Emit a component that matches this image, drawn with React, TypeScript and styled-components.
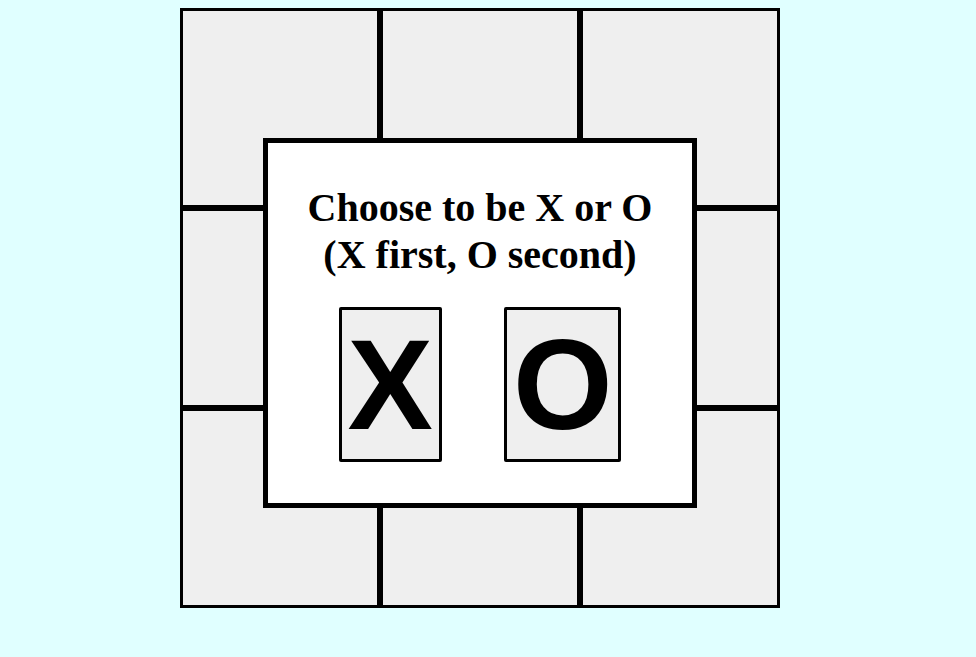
import React from "react";
import styled, { createGlobalStyle } from "styled-components";

const GlobalStyle = createGlobalStyle`
  html, body {
    margin: 0;
    padding: 0;
    background: #e0ffff;
  }
  body {
    font-family: "Liberation Serif", "Times New Roman", serif;
  }
`;

const PageStyled = styled.div`
  padding: 8px 0 0 180px;
`;

const BoardStyled = styled.div`
  position: relative;
  display: grid;
  grid-template-columns: repeat(3, 200px);
  grid-template-rows: repeat(3, 200px);
  width: 600px;
`;

const CellStyled = styled.button`
  box-sizing: border-box;
  width: 200px;
  height: 200px;
  margin: 0;
  padding: 0;
  border: 3px solid #000;
  background: #efefef;
  cursor: pointer;
`;

const ModalStyled = styled.div`
  position: absolute;
  top: 130px;
  left: 50%;
  transform: translateX(-50%);
  box-sizing: border-box;
  width: 434px;
  padding: 41px 0 41px;
  border: 5px solid #000;
  background: #fff;
  display: flex;
  flex-direction: column;
  align-items: center;
`;

const TitleStyled = styled.h2`
  margin: 0 0 29px;
  font-family: "Liberation Serif", "Times New Roman", serif;
  font-size: 40px;
  font-weight: bold;
  line-height: normal;
  text-align: center;
  color: #000;
`;

const ChoiceRowStyled = styled.div`
  display: flex;
  gap: 62px;
`;

const ChoiceButtonStyled = styled.button`
  margin: 0;
  padding: 1px 6px;
  border: 3px solid #000;
  border-radius: 2px;
  background: #efefef;
  color: #000;
  font-family: "Liberation Sans", Arial, sans-serif;
  font-size: 128px;
  font-weight: bold;
  line-height: normal;
  cursor: pointer;
`;

const CELLS = Array.from({ length: 9 }, (_, i) => i);

const App = () => {
  return (
    <>
      <GlobalStyle />
      <PageStyled>
        <BoardStyled>
          {CELLS.map((i) => (
            <CellStyled key={i} />
          ))}
          <ModalStyled>
            <TitleStyled>
              Choose to be X or O
              <br />
              (X first, O second)
            </TitleStyled>
            <ChoiceRowStyled>
              <ChoiceButtonStyled>X</ChoiceButtonStyled>
              <ChoiceButtonStyled>O</ChoiceButtonStyled>
            </ChoiceRowStyled>
          </ModalStyled>
        </BoardStyled>
      </PageStyled>
    </>
  );
};

export default App;
